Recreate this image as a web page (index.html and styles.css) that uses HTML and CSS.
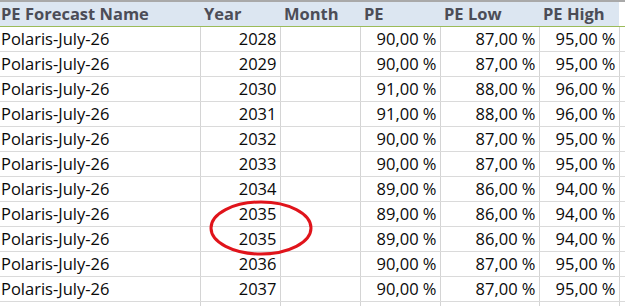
FILE: index.html
```html
<!DOCTYPE html>
<html>
<head>
<meta charset="utf-8">
<link rel="stylesheet" href="styles.css">
</head>
<body>
<div class="sheet">
  <table class="grid">
    <colgroup>
      <col class="c-name"><col class="c-year"><col class="c-month"><col class="c-pe"><col class="c-low"><col class="c-high"><col class="c-extra">
    </colgroup>
    <thead>
      <tr>
        <th class="first">PE Forecast Name</th><th>Year</th><th>Month</th><th>PE</th><th>PE Low</th><th>PE High</th><th class="extra"></th>
      </tr>
    </thead>
    <tbody>
      <tr><td>Polaris-July-26</td><td class="num">2028</td><td></td><td class="num">90,00 %</td><td class="num">87,00 %</td><td class="num">95,00 %</td><td></td></tr>
      <tr><td>Polaris-July-26</td><td class="num">2029</td><td></td><td class="num">90,00 %</td><td class="num">87,00 %</td><td class="num">95,00 %</td><td></td></tr>
      <tr><td>Polaris-July-26</td><td class="num">2030</td><td></td><td class="num">91,00 %</td><td class="num">88,00 %</td><td class="num">96,00 %</td><td></td></tr>
      <tr><td>Polaris-July-26</td><td class="num">2031</td><td></td><td class="num">91,00 %</td><td class="num">88,00 %</td><td class="num">96,00 %</td><td></td></tr>
      <tr><td>Polaris-July-26</td><td class="num">2032</td><td></td><td class="num">90,00 %</td><td class="num">87,00 %</td><td class="num">95,00 %</td><td></td></tr>
      <tr><td>Polaris-July-26</td><td class="num">2033</td><td></td><td class="num">90,00 %</td><td class="num">87,00 %</td><td class="num">95,00 %</td><td></td></tr>
      <tr><td>Polaris-July-26</td><td class="num">2034</td><td></td><td class="num">89,00 %</td><td class="num">86,00 %</td><td class="num">94,00 %</td><td></td></tr>
      <tr><td>Polaris-July-26</td><td class="num">2035</td><td></td><td class="num">89,00 %</td><td class="num">86,00 %</td><td class="num">94,00 %</td><td></td></tr>
      <tr><td>Polaris-July-26</td><td class="num">2035</td><td></td><td class="num">89,00 %</td><td class="num">86,00 %</td><td class="num">94,00 %</td><td></td></tr>
      <tr><td>Polaris-July-26</td><td class="num">2036</td><td></td><td class="num">90,00 %</td><td class="num">87,00 %</td><td class="num">95,00 %</td><td></td></tr>
      <tr><td>Polaris-July-26</td><td class="num">2037</td><td></td><td class="num">90,00 %</td><td class="num">87,00 %</td><td class="num">95,00 %</td><td></td></tr>
      <tr><td></td><td></td><td></td><td></td><td></td><td></td><td></td></tr>
    </tbody>
  </table>
  <svg class="circle" width="110" height="60" viewBox="0 0 110 60">
    <ellipse cx="53" cy="29" rx="50" ry="26" fill="none" stroke="#e0141b" stroke-width="3"/>
  </svg>
</div>
</body>
</html>
```

FILE: styles.css
```css
html, body {
  margin: 0;
  padding: 0;
  background: #ffffff;
}

.sheet {
  position: relative;
  width: 625px;
  height: 306px;
  overflow: hidden;
  border-top: 2px solid #a9a9a9;
  box-sizing: border-box;
}

.grid {
  border-collapse: collapse;
  table-layout: fixed;
  width: 625px;
  font-family: "Open Sans", Lato, sans-serif;
  font-size: 16.5px;
  color: #0a0a0a;
}

.c-name { width: 200px; }
.c-year { width: 80px; }
.c-month { width: 80px; }
.c-pe { width: 80px; }
.c-low { width: 99px; }
.c-high { width: 80px; }
.c-extra { width: 6px; }

.grid th {
  height: 24px;
  padding: 0 0 0 4px;
  line-height: 24px;
  background: #dce6f1;
  color: #4c4d57;
  font-weight: bold;
  font-size: 16.5px;
  text-align: left;
  border-bottom: 1px solid #9bbb59;
  white-space: nowrap;
  overflow: hidden;
  box-sizing: content-box;
  vertical-align: middle;
}

.grid th.first {
  padding-left: 1px;
}

.grid th.extra {
  background: #ffffff;
}

.grid td {
  height: 24px;
  padding: 0 1px;
  line-height: 24px;
  border-bottom: 1px solid #dadada;
  border-right: 1px solid #d4d4d4;
  white-space: nowrap;
  overflow: hidden;
  box-sizing: content-box;
  vertical-align: middle;
}

.grid td.num {
  text-align: right;
  padding-right: 3px;
}

.circle {
  position: absolute;
  left: 208px;
  top: 197px;
}
```
